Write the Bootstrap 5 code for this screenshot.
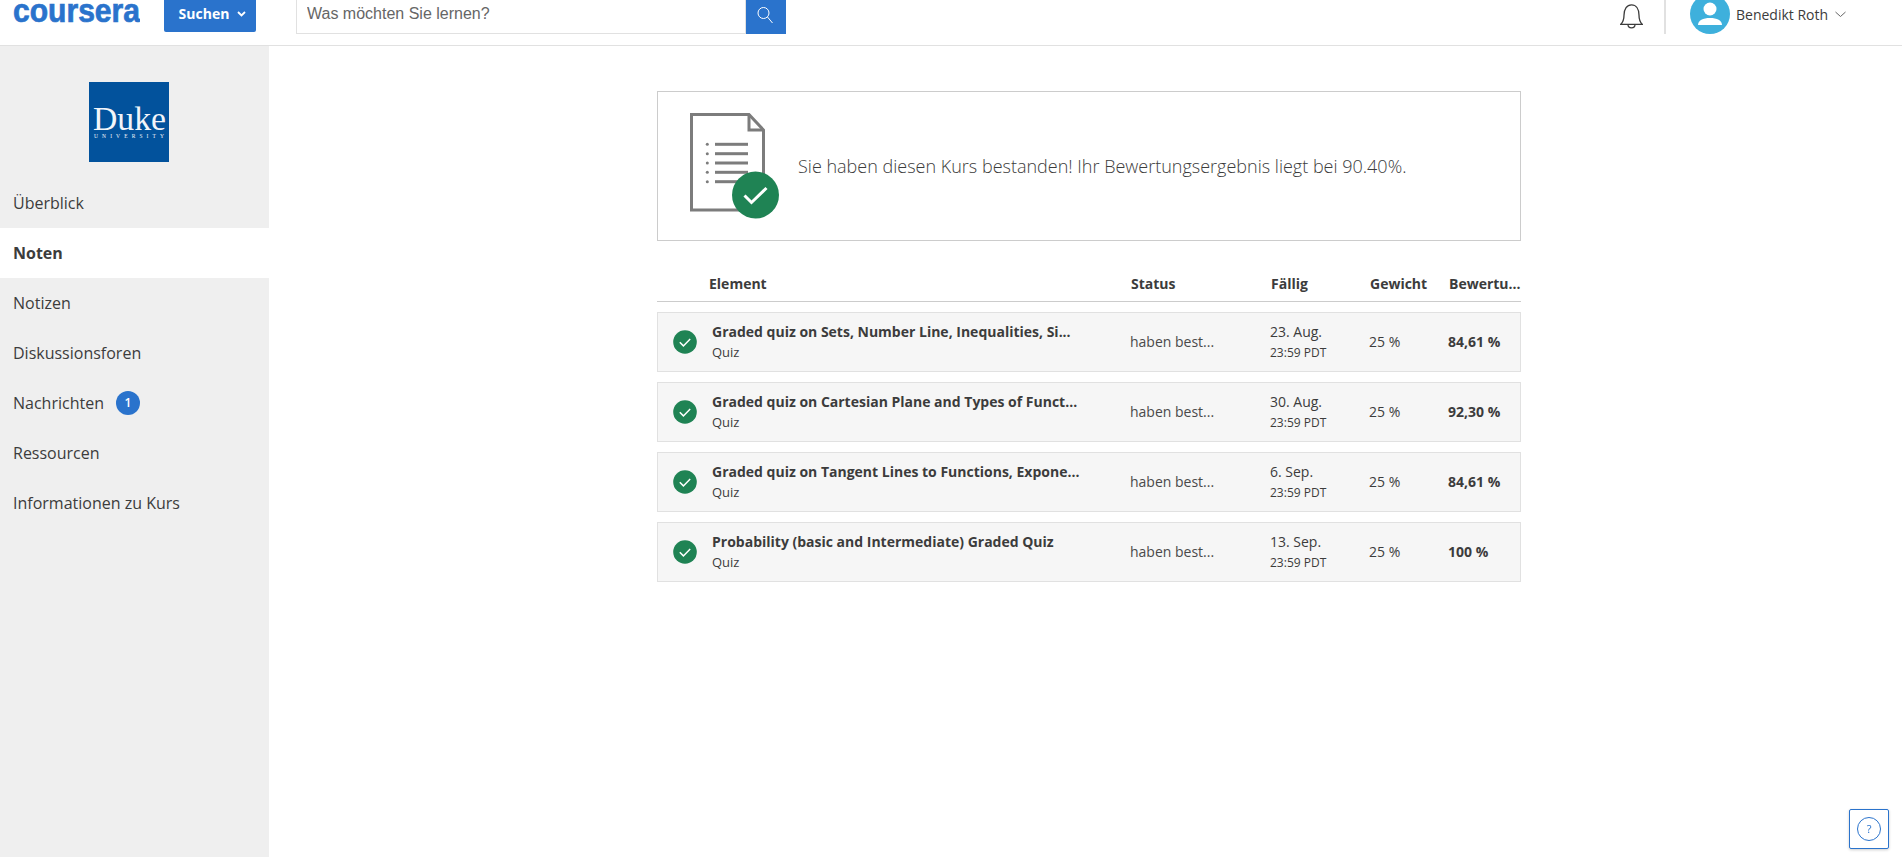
<!DOCTYPE html>
<html lang="de">
<head>
<meta charset="UTF-8" />
<meta name="viewport" content="width=device-width, initial-scale=1.0" />
<title>Noten</title>
<link href="https://cdn.jsdelivr.net/npm/bootstrap@5.3.0/dist/css/bootstrap.min.css" rel="stylesheet" />
<style>
  html, body { height: 100%; }
  body { font-family: "Open Sans", sans-serif; color: #3c3c3c; font-size: 14px; overflow: hidden; background: #fff; }
  .top-bar { height: 46px; border-bottom: 1px solid #e1e1e1; overflow: hidden; }
  .brand-logo { margin: 0 24px 0 13px; width: 127px; height: 26px; display: block; }
  .brand-logo text { font-family: "Liberation Sans", sans-serif; font-weight: 700; font-size: 34px; fill: #2a73cc; stroke: #2a73cc; stroke-width: .7px; }
  .btn-search { background: #2a73cc; color: #fff; width: 92px; height: 32px; border: 0; border-radius: 0 0 2px 2px; font-weight: 700; font-size: 14px; padding: 0 0 5px 5px; }
  .search-group { width: 490px; margin-left: 40px; height: 34px; }
  .search-group .form-control { font-family: "Liberation Sans", sans-serif; font-size: 16px; height: 34px; padding: 0 10px 6px; border: 1px solid #e1e1e1; border-top: 0; border-radius: 0; }
  .search-group .form-control::placeholder { color: #666; opacity: 1; }
  .search-go { width: 41px; height: 34px; background: #2a73cc; border: 0; padding: 0 2px 4px 0; flex-shrink: 0; }
  .bell-icon { margin-right: 21px; margin-top: 4px; }
  .top-divider { width: 2px; height: 34px; background: #e1e1e1; margin-right: 24px; }
  .user-name { margin: 0 7px 0 6px; white-space: nowrap; width: 92px; height: 28px; }
  .user-menu { margin-right: 56px; }
  .user-caret { margin-top: 6px; }
  .page-body { height: calc(100% - 46px); }
  .side-nav { width: 269px; background: #efefef; flex-shrink: 0; padding-top: 36px; }
  .duke-logo { width: 80px; height: 80px; background: #02529c; color: #fff; margin: 0 auto 16px 89px; }
  .duke-logo text { fill: #f2f5f9; font-family: "Liberation Serif", serif; }
  .side-link { height: 50px; padding-left: 13px; font-size: 16px; color: #3c3c3c; text-decoration: none; }
  .side-link.is-current { background: #fff; font-weight: 700; }
  .msg-count { width: 24px; height: 24px; border-radius: 50%; background: #2a73cc; color: #fff; font-size: 12px; font-weight: 600; margin-left: 12px; }
  .grades-wrap { width: 864px; margin: 45px 0 0 388px; }
  .pass-banner { height: 150px; border: 1px solid #ccc; padding-left: 32px; margin-bottom: 22px; }
  .pass-banner p { font-size: 18px; font-weight: 300; color: #3c3c3c; margin: 0 0 0 18px; }
  .grade-head { height: 39px; border-bottom: 1px solid #ccc; margin-bottom: 10px; font-weight: 700; padding-top: 2px; }
  .grade-row { height: 60px; background: #f6f6f6; border: 1px solid #e1e1e1; margin-bottom: 10px; }
  .cell-check { width: 54px; padding-left: 15px; }
  .cell-item { width: 418px; }
  .cell-status { width: 140px; }
  .cell-due { width: 99px; }
  .cell-weight { width: 79px; }
  .cell-score { width: 72px; white-space: nowrap; }
  .grade-row .cell-status, .grade-row .cell-weight, .grade-row .cell-score { padding-bottom: 2px; }
  .grade-head .cell-check { width: 52px; }
  .grade-head .cell-item { width: 422px; }
  .grade-head .cell-score { width: 72px; }
  .item-title { font-weight: 700; line-height: 20px; }
  .item-sub { font-size: 13px; line-height: 20px; }
  .due-time { font-size: 12px; line-height: 20px; margin-top: 1px; }
  .status-text { color: #4a4a4a; }
  .help-btn { position: fixed; left: 1849px; top: 809px; width: 40px; height: 40px; background: #fff; border: 1.5px solid #2a73cc; border-radius: 2px; box-shadow: 0 1px 3px rgba(0,0,0,.2); }
  .help-ring { width: 24px; height: 24px; border: 1px solid #2a73cc; border-radius: 50%; color: #2a73cc; font-size: 11px; }
</style>
</head>
<body>
  <header class="top-bar d-flex align-items-start">
    <svg class="brand-logo" viewBox="0 0 127 26" role="img" aria-label="coursera"><text x="0" y="22" textLength="127" lengthAdjust="spacingAndGlyphs">coursera</text></svg>
    <button class="btn-search d-flex align-items-center justify-content-center gap-2" type="button">Suchen
      <svg width="9" height="6" viewBox="0 0 9 6"><path d="M1 1l3.500 3.500L8 1" fill="none" stroke="#fff" stroke-width="1.800"/></svg>
    </button>
    <div class="input-group search-group flex-nowrap">
      <input class="form-control" type="text" placeholder="Was möchten Sie lernen?" />
      <button class="search-go d-flex align-items-center justify-content-center" type="button" aria-label="Suchen">
        <svg width="18" height="18" viewBox="0 0 18 18"><circle cx="7.500" cy="7" r="5.500" fill="none" stroke="#fff" stroke-width="1"/><path d="M11.500 11l5 6" stroke="#fff" stroke-width="1" fill="none"/></svg>
      </button>
    </div>
    <div class="ms-auto d-flex align-items-start user-menu">
      <svg class="bell-icon" width="23" height="25" viewBox="0 0 23 25"><path d="M.8 20.300c2-2 3.200-4.300 3.200-9C4 4.800 7 .8 11.500.8S19 4.800 19 11.300c0 4.700 1.200 7 3.200 9zM8 20.500c0 4.600 7 4.600 7 0" fill="none" stroke="#3c3c3c" stroke-width="1.300"/></svg>
      <div class="top-divider"></div>
      <svg width="40" height="34" viewBox="0 6 40 34"><circle cx="20" cy="20" r="20" fill="#3eb0dc"/><ellipse cx="20" cy="15" rx="6.500" ry="6.500" fill="#fff"/><path d="M8 31c0-4.500 5-7 12-7s12 2.500 12 7z" fill="#fff"/></svg>
      <span class="user-name d-flex align-items-center">Benedikt Roth</span>
      <svg class="user-caret" width="11" height="18" viewBox="0 0 11 18"><path d="M.5 6l5 4.500 5-4.500" fill="none" stroke="#666" stroke-width="1"/></svg>
    </div>
  </header>

  <div class="page-body d-flex">
    <nav class="side-nav d-flex flex-column">
      <svg class="duke-logo d-block" viewBox="0 0 80 80" role="img" aria-label="Duke University">
        <text x="4" y="48" font-size="33" textLength="73" lengthAdjust="spacingAndGlyphs">Duke</text>
        <text x="5" y="56" font-size="5.500" textLength="70" font-family="Liberation Sans">UNIVERSITY</text>
      </svg>
      <a class="side-link d-flex align-items-center" href="#">Überblick</a>
      <a class="side-link is-current d-flex align-items-center" href="#">Noten</a>
      <a class="side-link d-flex align-items-center" href="#">Notizen</a>
      <a class="side-link d-flex align-items-center" href="#">Diskussionsforen</a>
      <a class="side-link d-flex align-items-center" href="#">Nachrichten <span class="msg-count d-flex align-items-center justify-content-center">1</span></a>
      <a class="side-link d-flex align-items-center" href="#">Ressourcen</a>
      <a class="side-link d-flex align-items-center" href="#">Informationen zu Kurs</a>
    </nav>

    <main class="flex-grow-1">
      <div class="grades-wrap">
        <div class="pass-banner d-flex align-items-center">
          <svg width="90" height="106" viewBox="0 0 90 106">
            <path d="M1.500 1.500H59L73.500 17V97H1.500z" fill="#fff" stroke="#7c7c7c" stroke-width="3"/>
            <path d="M59 1.500V17H73.500" fill="none" stroke="#7c7c7c" stroke-width="3"/>
            <g fill="#7c7c7c">
              <circle cx="17.300" cy="31.300" r="1.500"/><rect x="25" y="29.800" width="33" height="3"/>
              <circle cx="17.300" cy="40.700" r="1.500"/><rect x="25" y="39.200" width="33" height="3"/>
              <circle cx="17.300" cy="50" r="1.500"/><rect x="25" y="48.500" width="33" height="3"/>
              <circle cx="17.300" cy="59.300" r="1.500"/><rect x="25" y="57.800" width="33" height="3"/>
              <circle cx="17.300" cy="68.700" r="1.500"/><rect x="25" y="67.200" width="33" height="3"/>
            </g>
            <circle cx="65.500" cy="82" r="23.500" fill="#1f8354"/>
            <path d="M54.500 82.500l7 7L76.500 75" fill="none" stroke="#fff" stroke-width="3"/>
          </svg>
          <p>Sie haben diesen Kurs bestanden! Ihr Bewertungsergebnis liegt bei 90.40%.</p>
        </div>

        <div class="grade-head d-flex align-items-center">
          <div class="cell-check"></div>
          <div class="cell-item">Element</div>
          <div class="cell-status">Status</div>
          <div class="cell-due">Fällig</div>
          <div class="cell-weight">Gewicht</div>
          <div class="cell-score">Bewertu...</div>
        </div>

        <div id="gradeRows"></div>
      </div>
    </main>
  </div>

  <button class="help-btn d-flex align-items-center justify-content-center p-0" type="button" aria-label="Hilfe"><span class="help-ring d-flex align-items-center justify-content-center">?</span></button>

  <script src="https://cdn.jsdelivr.net/npm/bootstrap@5.3.0/dist/js/bootstrap.bundle.min.js"></script>
  <script>
    const grades = [
      ["Graded quiz on Sets, Number Line, Inequalities, Si...", "23. Aug.", "84,61 %"],
      ["Graded quiz on Cartesian Plane and Types of Funct...", "30. Aug.", "92,30 %"],
      ["Graded quiz on Tangent Lines to Functions, Expone...", "6. Sep.", "84,61 %"],
      ["Probability (basic and Intermediate) Graded Quiz", "13. Sep.", "100 %"],
    ];
    document.getElementById("gradeRows").innerHTML = grades.map((g) => `
      <div class="grade-row d-flex align-items-center">
        <div class="cell-check d-flex">
          <svg width="24" height="24" viewBox="0 0 24 24"><circle cx="12" cy="12" r="11.800" fill="#1f8354"/><path d="M6.800 12.300l3.600 3.600 6.800-7" fill="none" stroke="#fff" stroke-width="1.500"/></svg>
        </div>
        <div class="cell-item"><div class="item-title">${g[0]}</div><div class="item-sub">Quiz</div></div>
        <div class="cell-status status-text">haben best...</div>
        <div class="cell-due"><div class="item-title fw-normal">${g[1]}</div><div class="due-time">23:59 PDT</div></div>
        <div class="cell-weight">25 %</div>
        <div class="cell-score fw-bold">${g[2]}</div>
      </div>`).join("");
  </script>
</body>
</html>
